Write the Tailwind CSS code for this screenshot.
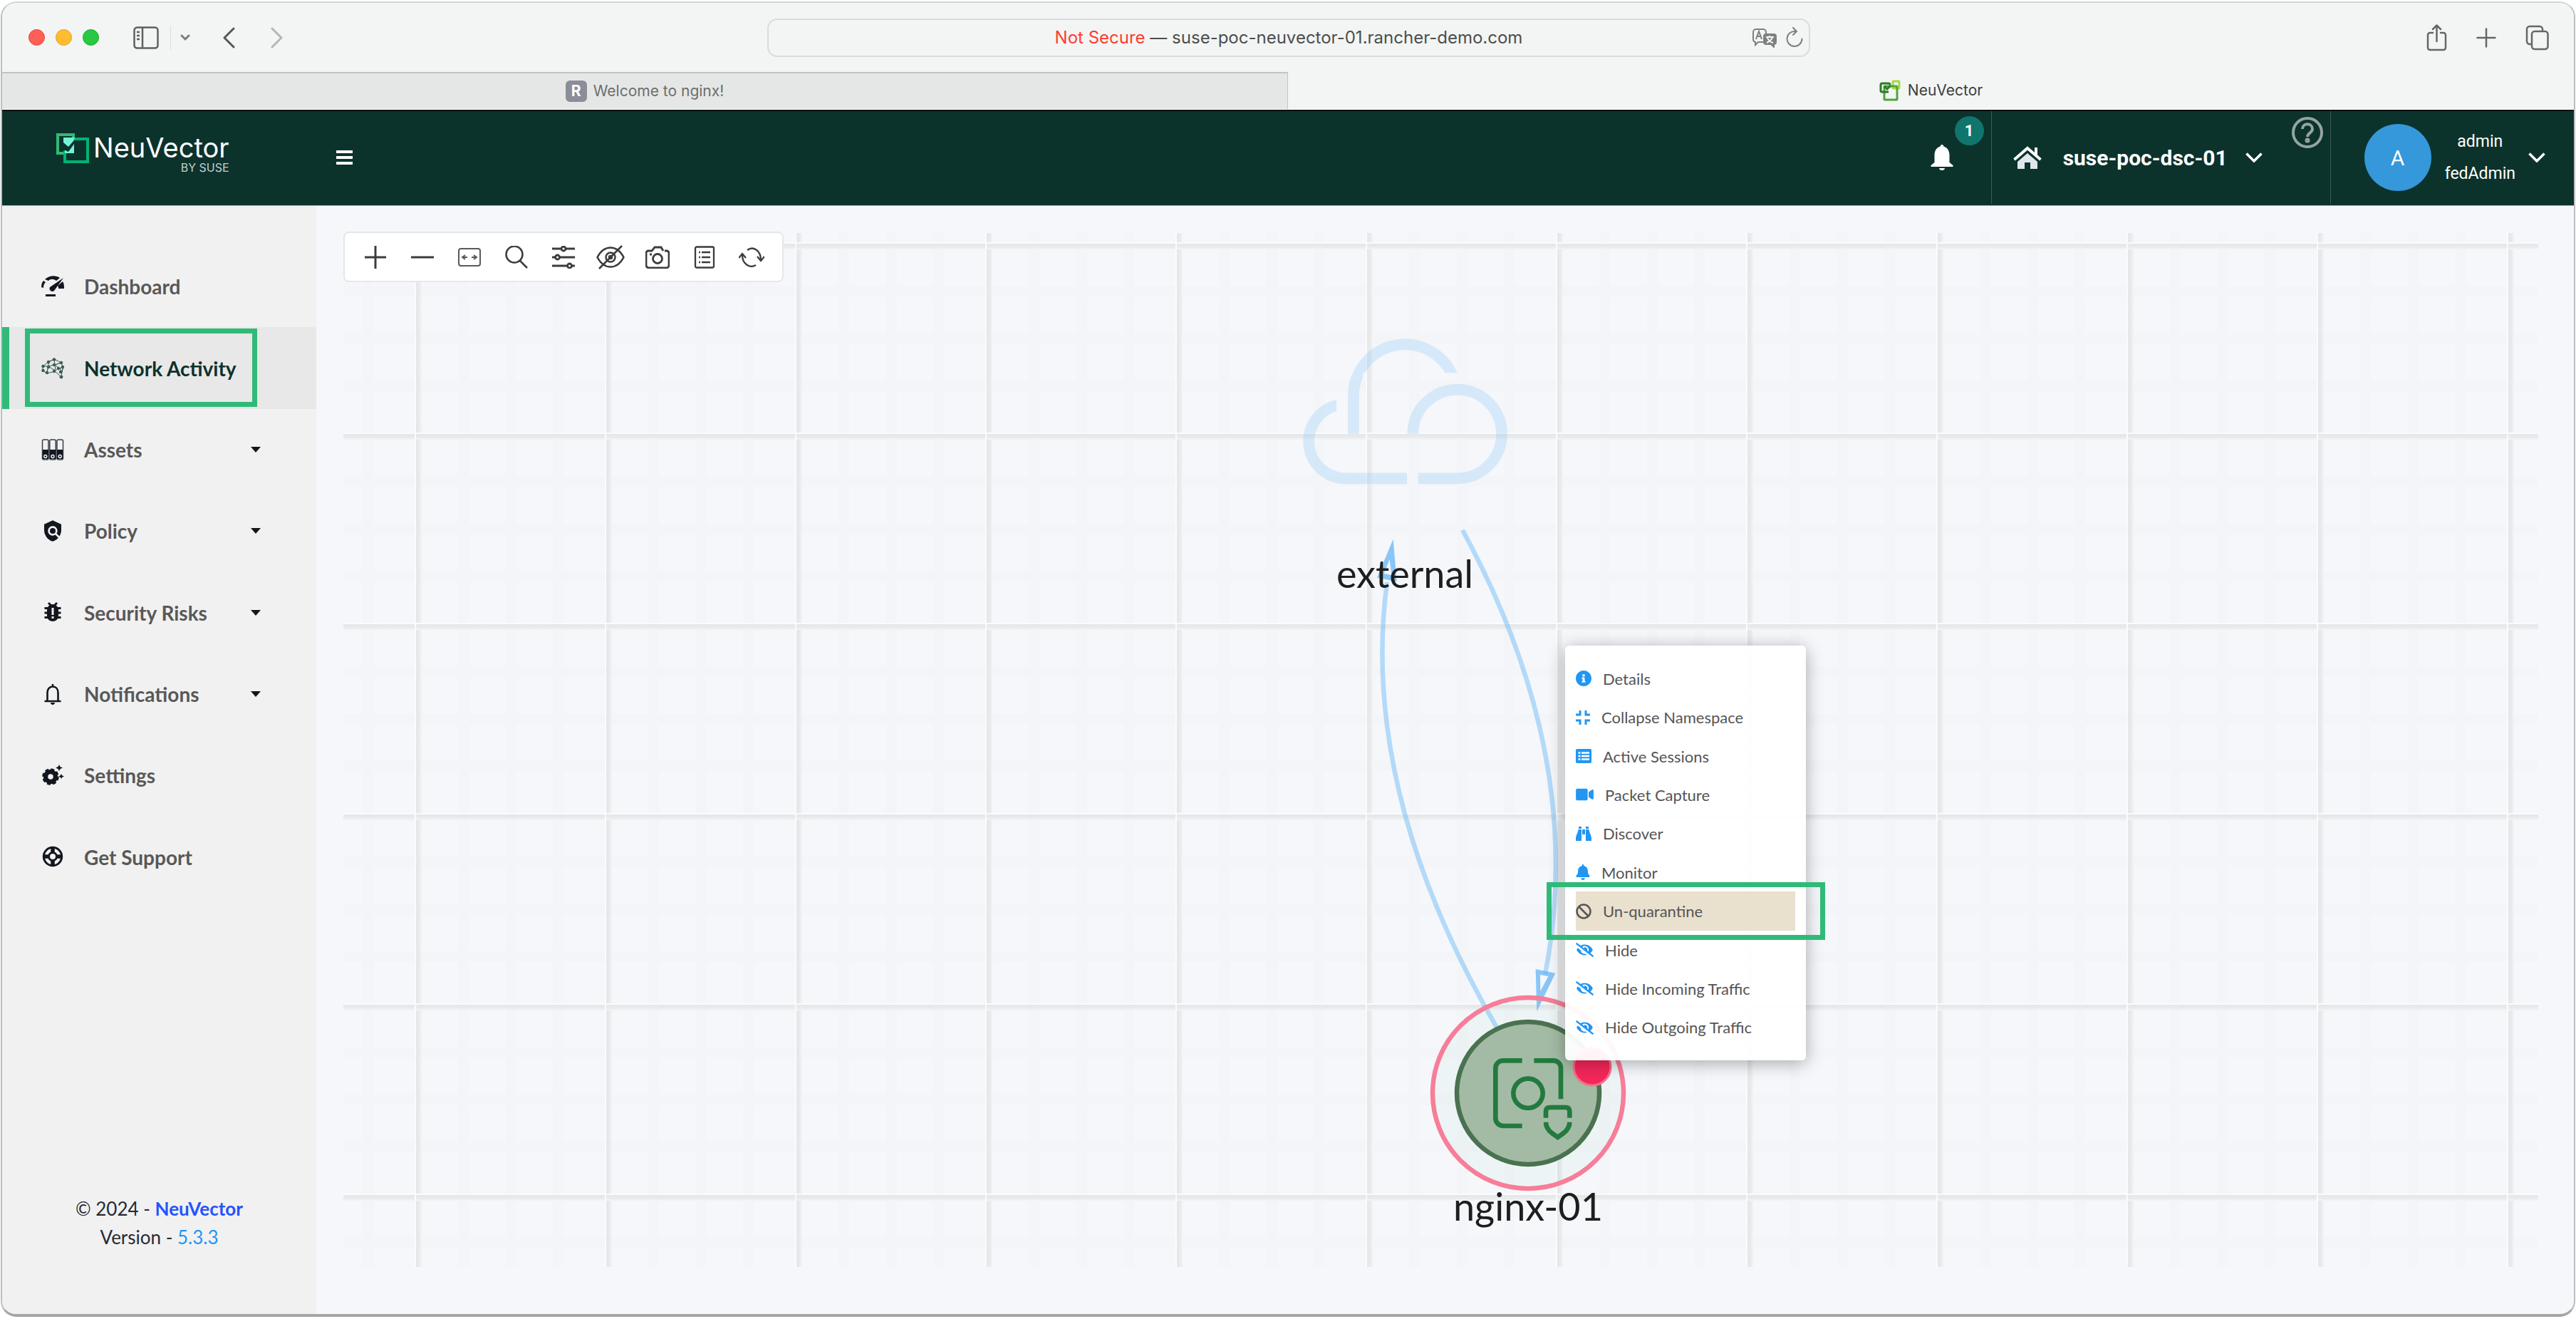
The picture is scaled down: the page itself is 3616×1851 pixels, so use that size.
<!DOCTYPE html>
<html lang="en">
<head>
<meta charset="utf-8">
<title>NeuVector</title>
<script src="https://cdn.jsdelivr.net/npm/@tailwindcss/browser@4"></script>
</head>
<body class="bg-white font-['Lato',sans-serif]">
<svg class="hidden" aria-hidden="true">
  <symbol id="eye-slash" viewBox="0 0 640 512"><path fill="currentColor" d="M320 400c-75.85 0-137.25-58.71-142.9-133.11L72.2 185.82c-13.79 17.3-26.48 35.59-36.72 55.59a32.35 32.35 0 0 0 0 29.19C89.71 376.41 197.07 448 320 448c26.91 0 52.87-4 77.89-10.46L346 397.39a144.13 144.13 0 0 1-26 2.61zm313.82 58.1l-110.55-85.44a331.25 331.25 0 0 0 81.25-102.07 32.35 32.35 0 0 0 0-29.19C550.29 135.59 442.93 64 320 64a308.15 308.15 0 0 0-147.32 37.7L45.46 3.37A16 16 0 0 0 23 6.18L3.37 31.45A16 16 0 0 0 6.18 53.9l588.36 454.73a16 16 0 0 0 22.46-2.81l19.64-25.27a16 16 0 0 0-2.82-22.45zm-183.72-142l-39.3-30.38A94.75 94.75 0 0 0 416 256a94.76 94.76 0 0 0-121.31-92.21A47.65 47.65 0 0 1 304 192a46.64 46.64 0 0 1-1.54 10l-73.61-56.89A142.31 142.31 0 0 1 320 112a143.92 143.92 0 0 1 144 144c0 21.63-5.29 41.79-13.9 60.11z"/></symbol>
  <symbol id="caret" viewBox="0 0 14 8"><path fill="#12161f" d="M0 0h14L7 8z"/></symbol>
</svg>

<div class="flex min-h-screen flex-col px-px pt-[2px] pb-[3px]">
<div class="flex flex-1 flex-col overflow-hidden rounded-[22px] border-2 border-b-4 border-[#bdbfbe] border-t-[#d2d3d3] border-b-[#a5a5a3] bg-[#f5f7fb]">

  <!-- Browser toolbar -->
  <div class="grid h-[97px] grid-cols-[1fr_40.6%_1fr] items-center bg-[#f3f5f4] pl-[2px] font-['Inter',sans-serif]">
    <div class="flex items-center pl-[35px]">
      <div class="flex gap-[15px]">
        <button aria-label="Close" class="size-[23px] rounded-full border border-[#e2463f] bg-[#ff5f57]"></button>
        <button aria-label="Minimize" class="size-[23px] rounded-full border border-[#e0a123] bg-[#febc2e]"></button>
        <button aria-label="Zoom" class="size-[23px] rounded-full border border-[#1aab29] bg-[#28c840]"></button>
      </div>
      <button aria-label="Sidebar" class="ml-[48px]"><svg class="h-8 w-9" viewBox="0 0 36 32" fill="none" stroke="#5e605f" stroke-width="2.5"><rect x="1.5" y="1.5" width="33" height="29" rx="4"/><path d="M13 2v28M5 8h4M5 13h4M5 18h4"/></svg></button>
      <span class="ml-4 h-[34px] w-px bg-[#dcdedd]"></span>
      <button aria-label="Tab groups" class="ml-[13px]"><svg class="h-3 w-[14px]" viewBox="0 0 14 12" fill="none" stroke="#7b7d7c" stroke-width="3" stroke-linecap="round"><path d="M2 3l5 5 5-5"/></svg></button>
      <button aria-label="Back" class="ml-[46px]"><svg class="h-[30px] w-[17px]" viewBox="0 0 17 30" fill="none" stroke="#565857" stroke-width="3" stroke-linecap="round" stroke-linejoin="round"><path d="M15 2L2 15l13 13"/></svg></button>
      <button aria-label="Forward" class="ml-[50px]"><svg class="h-[30px] w-[17px]" viewBox="0 0 17 30" fill="none" stroke="#b4b6b5" stroke-width="3" stroke-linecap="round" stroke-linejoin="round"><path d="M2 2l13 13L2 28"/></svg></button>
    </div>
    <div class="relative flex h-[54px] items-center justify-center rounded-[14px] border-2 border-[#dadcdb] text-2xl text-[#4c4e4d]">
      <label for="url" class="whitespace-pre"><span class="text-[#ff3b30]">Not Secure</span> — </label><input id="url" type="text" value="suse-poc-neuvector-01.rancher-demo.com" class="field-sizing-content bg-transparent outline-none">
      <div class="absolute right-2 flex items-center gap-3">
        <button aria-label="Translate"><svg class="h-7 w-9" viewBox="0 0 36 28" fill="none" stroke="#7e807f" stroke-width="2"><path d="M16 20H9l-4 4v-4a4 4 0 0 1-3-4V6a4 4 0 0 1 4-4h10a4 4 0 0 1 4 4v2M6 16l4-11 4 11M7 12h6"/><path fill="#7e807f" d="M20 9h11a3 3 0 0 1 3 3v8a3 3 0 0 1-3 3v4l-4-4h-7a3 3 0 0 1-3-3v-8a3 3 0 0 1 3-3z"/><path stroke="#f3f5f4" d="M20 13h11M25 11v2M29 13c-1 4-4 6-8 8M22 14c1 3 4 6 8 7"/></svg></button>
        <button aria-label="Reload"><svg class="h-[30px] w-6" viewBox="0 0 24 30" fill="none" stroke="#7e807f" stroke-width="2" stroke-linecap="round"><path d="M13 6a10.500 10.500 0 1 0 9.500 10.500M10 1l5 5-5 5"/></svg></button>
      </div>
    </div>
    <div class="flex items-center justify-end gap-[41px] pr-[35px] text-[#656766]">
      <button aria-label="Share"><svg class="h-[38px] w-[29px]" viewBox="0 0 29 38" fill="none" stroke="currentColor" stroke-width="2.500" stroke-linecap="round" stroke-linejoin="round"><path d="M9 12H5a3 3 0 0 0-3 3v18a3 3 0 0 0 3 3h19a3 3 0 0 0 3-3V15a3 3 0 0 0-3-3h-4M14.500 24V2M9 7l5.500-5.500L20 7"/></svg></button>
      <button aria-label="New tab"><svg class="size-7" viewBox="0 0 28 28" stroke="currentColor" stroke-width="2.500" stroke-linecap="round"><path d="M14 1.500v25M1.500 14h25"/></svg></button>
      <button aria-label="Tab overview"><svg class="h-9 w-[33px]" viewBox="0 0 33 36" fill="none" stroke="currentColor" stroke-width="2.500"><rect x="9" y="9" width="22.500" height="25" rx="4"/><path d="M9 27H6a4 4 0 0 1-4-4V6a4 4 0 0 1 4-4h14a4 4 0 0 1 4 4v3"/></svg></button>
    </div>
  </div>

  <!-- Browser tabs -->
  <div class="grid h-[53px] grid-cols-2 border-b border-white bg-[#f3f5f4] font-['Inter',sans-serif] text-[21px]">
    <a href="#" class="flex items-center justify-center gap-[9px] border-t-2 border-r border-[#c2c4c3] bg-[#e5e7e6] text-[#6c6e6d]"><span class="flex size-[30px] items-center justify-center rounded-md bg-[#8b8d98] font-bold text-white">R</span>Welcome to nginx!</a>
    <a href="#" class="flex items-center justify-center gap-[10px] text-[#3c3e3d]">
      <svg class="size-[30px]" viewBox="0 0 30 30" fill="none" stroke-width="3"><rect x="19" y="2" width="9" height="10" rx="1" stroke="#a8da3a"/><rect x="7" y="9" width="18" height="19" rx="1" stroke="#4ea53a"/><path stroke="#2d7a26" d="M13 17H4a2 2 0 0 1-2-2V7a2 2 0 0 1 2-2h9a2 2 0 0 1 2 2M7 9l4 4 5-5"/></svg>NeuVector</a>
  </div>

  <!-- Application header -->
  <header class="flex h-[135px] items-center border-t-2 border-t-[#02120f] border-b border-b-[#9db0ac] bg-[#0c322c] pb-[2px] font-['Roboto',sans-serif] text-white">
    <a href="#" class="flex w-[469px] items-start pb-3 pl-[76px] font-['Inter',sans-serif]">
      <svg class="h-[42px] w-[46px]" viewBox="0 0 46 42" fill="none" stroke-width="4"><path stroke="#30ba78" d="M11 28H2V2h22v6"/><path stroke="#00b373" d="M12 24v16h32V8H24"/><path fill="#73f3d5" d="M10 6h16l-2 5-7 8-7-6zM25 15v13H12v-4l5 2z"/></svg>
      <span class="ml-[6px] flex flex-col items-end"><span class="text-[38px] leading-10">NeuVector</span><span class="text-base leading-4 text-[#c3cfcd]">BY SUSE</span></span>
    </a>
    <button aria-label="Toggle menu" class="flex flex-col gap-1"><span class="h-1 w-[23px] bg-white"></span><span class="h-1 w-[23px] bg-white"></span><span class="h-1 w-[23px] bg-white"></span></button>
    <div class="ml-auto flex h-full">
      <button aria-label="Notifications" class="relative flex w-[85px] items-center">
        <svg class="h-9 w-8" viewBox="0 0 32 36" fill="#fff"><path d="M16 0c1.500 0 2.300 1 2.300 2.600C24 4 26.500 9 26.500 15v10l5 4v2H.5v-2l5-4V15c0-6 2.500-11 8.200-12.400C13.700 1 14.500 0 16 0zM12 33h8c0 2-2 3-4 3s-4-1-4-3z"/></svg>
        <span class="absolute top-[7px] left-[34px] flex size-[41px] items-center justify-center rounded-full bg-[#10756d] text-[22px] font-bold">1</span>
      </button>
      <button class="flex w-[422px] items-center border-l border-[#3d5b56] pl-[30px] text-[30px] font-bold">
        <svg class="h-8 w-10" viewBox="0 0 40 32"><path fill="#dfe6ee" d="M20 10L6 22v10h10v-9h8v9h10V22z"/><path fill="none" stroke="#fff" stroke-width="4" d="M1.500 19L20 3l18.500 16M32 2v11"/></svg>
        <span class="ml-[30px]">suse-poc-dsc-01</span>
        <svg class="ml-[25px] h-[14px] w-6" viewBox="0 0 24 14" fill="none" stroke="#fff" stroke-width="3.500"><path d="M1.500 1.500L12 12 22.500 1.500"/></svg>
      </button>
      <button aria-label="Help" class="mt-2 size-11 self-start text-[#93a5a2]"><svg viewBox="0 0 44 44" fill="none" stroke="currentColor" stroke-width="4"><circle cx="22" cy="22" r="20"/><path d="M15 17c0-9 14-9 14 0 0 5-7 6-7 11"/><circle cx="22" cy="33" r="1.500"/></svg></button>
      <button class="ml-[10px] flex items-center border-l border-[#3d5b56] pr-10 pl-[47px]">
        <span class="flex size-[94px] items-center justify-center rounded-full bg-[#3498db] text-[30px]">A</span>
        <span class="ml-[19px] flex flex-col items-center text-[23px] leading-[45px]"><span>admin</span><span>fedAdmin</span></span>
        <svg class="ml-[18px] h-[14px] w-6" viewBox="0 0 24 14" fill="none" stroke="#fff" stroke-width="3.500"><path d="M1.500 1.500L12 12 22.500 1.500"/></svg>
      </button>
    </div>
  </header>

  <div class="flex flex-1">
    <!-- Navigation -->
    <aside class="flex w-[441px] shrink-0 flex-col justify-between bg-[#f1f1f1] pt-14 pb-[88px]">
      <nav class="grid h-[915px] grid-rows-8 text-[28px] font-bold text-[#585858]">
        <a href="#" class="flex items-center border-l-[10px] border-transparent pl-[45px]"><svg class="mr-7 size-8" viewBox="0 0 32 32" fill="#12161f"><path d="M5 6C11 0 21 0 26 4l-5 4C17 5 13 5 10 8zM0 17c0-4 1-7 3-9l3 2c-2 2-3 4-3 8zM31 4L18 22a4 4 0 0 1-6-5zM30 9c2 3 2 6 2 10h-8c0-2 0-3-1-4zM6 27h14v3H6z"/></svg><span>Dashboard</span></a>
        <a href="#" class="relative flex items-center border-l-[10px] border-[#30ba78] bg-[#e8e8e8] pl-[45px] text-[#0c322c]"><svg class="mr-7 size-8" viewBox="0 0 32 32" fill="#3a5a54" stroke="#3a5a54"><path fill="none" d="M2 13L10 7l8-4 10 5 2 6-2 14-9-8-11 3-6-4 0-6 8 0 9-2 9-3-9 3-1-8-8 4v6l-2 8 2-8 9 6 1-7 6 4 5-3-5 3 3 5 2-8M18 20l6-4"/><circle cx="2.500" cy="13" r="1.800"/><circle cx="2.500" cy="19" r="1.800"/><circle cx="10" cy="7" r="1.800"/><circle cx="18" cy="3.500" r="1.800"/><circle cx="28" cy="8" r="1.800"/><circle cx="10" cy="14" r="1.800"/><circle cx="18" cy="11" r="1.800"/><circle cx="8" cy="22" r="1.800"/><circle cx="18" cy="20" r="1.800"/><circle cx="24" cy="16" r="1.800"/><circle cx="30" cy="14" r="1.800"/><circle cx="27" cy="21" r="1.800"/><circle cx="28" cy="28" r="2"/></svg><span>Network Activity</span>
          <span class="absolute top-[2px] left-[22px] h-[110px] w-[326px] border-[7px] border-[#30ba78]"></span></a>
        <a href="#" class="flex items-center border-l-[10px] border-transparent pl-[45px]"><svg class="mr-7 size-8" viewBox="0 0 32 32"><g fill="none" stroke="#3a3e48" stroke-width="1.500"><rect x="1.500" y="2" width="8.500" height="28" rx="2"/><rect x="11.800" y="2" width="8.500" height="28" rx="2"/><rect x="22" y="2" width="8.500" height="28" rx="2"/></g><path fill="#12161f" d="M2 16h8v13H2zM12 16h8v13h-8zM22 16h8v13h-8z"/><g fill="none" stroke="#fff" stroke-width="1.300"><circle cx="5.800" cy="25.500" r="2"/><circle cx="16" cy="25.500" r="2"/><circle cx="26.200" cy="25.500" r="2"/></g></svg><span>Assets</span><svg class="mr-[78px] ml-auto h-2 w-[14px]"><use href="#caret"/></svg></a>
        <a href="#" class="flex items-center border-l-[10px] border-transparent pl-[45px]"><svg class="mr-7 size-8" viewBox="0 0 24 24" fill="#12161f"><path d="M21 5l-9-4-9 4v6c0 5.550 3.840 10.740 9 12 2.300-.56 4.330-1.900 5.880-3.710l-3.120-3.120c-1.940 1.290-4.580 1.070-6.290-.64-1.950-1.950-1.950-5.120 0-7.070 1.950-1.950 5.120-1.950 7.070 0 1.710 1.710 1.920 4.350.64 6.290l2.900 2.900C20.290 15.690 21 13.380 21 11V5z"/><circle cx="12" cy="12" r="3"/></svg><span>Policy</span><svg class="mr-[78px] ml-auto h-2 w-[14px]"><use href="#caret"/></svg></a>
        <a href="#" class="flex items-center border-l-[10px] border-transparent pl-[45px]"><svg class="mr-7 size-8" viewBox="0 0 32 32"><path stroke="#12161f" stroke-width="3" d="M4.500 9.500h23M4.500 16h23M4.500 22.500h23M10 2l4 4M22 2l-4 4"/><path fill="#12161f" d="M16 4c5 0 8 4 8 8v8c0 5-4 8-8 8s-8-3-8-8v-8c0-4 3-8 8-8z"/><path stroke="#f1f1f1" stroke-width="3" d="M16 9v10M16 21v3"/></svg><span>Security Risks</span><svg class="mr-[78px] ml-auto h-2 w-[14px]"><use href="#caret"/></svg></a>
        <a href="#" class="flex items-center border-l-[10px] border-transparent pl-[45px]"><svg class="mr-7 size-8" viewBox="0 0 32 32" fill="none" stroke="#12161f" stroke-width="2.600"><path d="M4.500 26h23M8.500 26V14c0-5 3-8.500 7.500-8.500s7.500 3.500 7.500 8.500v12M16 2v3"/><path fill="#12161f" stroke="none" d="M13 28h6c0 4-6 4-6 0z"/></svg><span>Notifications</span><svg class="mr-[78px] ml-auto h-2 w-[14px]"><use href="#caret"/></svg></a>
        <a href="#" class="flex items-center border-l-[10px] border-transparent pl-[45px]"><svg class="mr-7 size-8" viewBox="0 0 32 32"><circle cx="13" cy="18" r="7" fill="none" stroke="#12161f" stroke-width="6.500"/><circle cx="13" cy="18" r="10.300" fill="none" stroke="#12161f" stroke-width="3" stroke-dasharray="4.900 3.190"/><path fill="#12161f" d="M25 1l1.500 3L30 5.500 26.500 7 25 10l-1.500-3L20 5.500 23.500 4zM28 14l1.200 2.200L32 17.500l-2.800 1.200L28 21l-1.200-2.300-2.800-1.200 2.800-1.300z"/></svg><span>Settings</span></a>
        <a href="#" class="flex items-center border-l-[10px] border-transparent pl-[45px]"><svg class="mr-7 size-8" viewBox="0 0 32 32" fill="none" stroke="#12161f"><circle cx="16" cy="15" r="12.700" stroke-width="3"/><circle cx="16" cy="15" r="5.500" stroke-width="3"/><path stroke-width="5.500" d="M16 2v7M16 21v7M3 15h7M22 15h7"/></svg><span>Get Support</span></a>
      </nav>
      <p class="text-center text-[26px] leading-10 text-[#262a36]">© 2024 - <a href="#" class="font-bold text-[#2453ff]">NeuVector</a><br>Version - <a href="#" class="text-[#2196f3]">5.3.3</a></p>
    </aside>

    <!-- Network graph -->
    <main class="flex flex-1 pt-9 pr-[50px] pb-[66px] pl-[38px]">
      <div class="relative flex-1">
        <svg class="absolute inset-0 size-full" aria-hidden="true">
          <defs>
            <linearGradient id="fade"><stop offset="0" stop-color="#e5e6e7"/><stop offset=".55" stop-color="#e9eaeb"/><stop offset="1" stop-color="#f3f4f6"/></linearGradient>
            <linearGradient id="fadeDown" x2="0" y2="1"><stop offset="0" stop-color="#e5e6e7"/><stop offset=".55" stop-color="#e9eaeb"/><stop offset="1" stop-color="#f3f4f6"/></linearGradient>
            <pattern id="grid" width="267" height="267" patternUnits="userSpaceOnUse" patternTransform="translate(100 15)">
              <path fill="#f4f5f8" d="M61 0h15v267H61zM128 0h15v267h-15zM194 0h15v267h-15zM0 61h267v15H0zM0 128h267v15H0zM0 194h267v15H0z"/>
              <path fill="#fafbfd" d="M0 0h2v267H0zM0 0h267v2H0z"/>
              <path fill="url(#fade)" d="M2 0h8v267H2z"/><path fill="url(#fadeDown)" d="M0 2h267v8H0z"/>
              <path fill="#fafbfd" d="M0 0h10v2H0zM0 0h2v10H0z"/>
            </pattern>
            <clipPath id="arcCut"><path d="M0 0h1200v250H400v400H0z"/></clipPath>
            <clipPath id="lobeCut"><path d="M0 0h288v500h600v400H0z"/></clipPath>
          </defs>
          <rect width="100%" height="100%" y="2" fill="url(#grid)"/>
          <g transform="translate(-482 -325)">
            <g transform="translate(1780 440) scale(.3333)" fill="none" stroke="#90caf9" stroke-opacity=".3" stroke-width="47">
              <path clip-path="url(#lobeCut)" d="M300 384.400A156 156 0 0 0 327 694H585"/>
              <path clip-path="url(#arcCut)" d="M360 507V348A217 217 0 0 1 785 285"/>
              <path d="M610 507A187 187 0 1 1 797 694H632"/>
            </g>
            <g fill="none" stroke="#64b5f6" stroke-opacity=".45" stroke-width="6.500">
              <path d="M2104 1447L2100 1440Q1908 1108 1947 817"/>
              <path d="M2053 744Q2228 1065 2169 1367"/>
            </g>
            <g fill="#64b5f6" fill-opacity=".75" fill-rule="evenodd">
              <path transform="translate(1780 440) scale(.3333)" d="M527 950l15 178-83-16zM512 1035l-24 60 32 6z"/>
              <path transform="translate(1980 1340) scale(.3333)" d="M527 60l83 17-78 161zM546 84l34 6-33 62z"/>
            </g>
            <circle cx="2145" cy="1534" r="134" fill="#30ba78" fill-opacity=".04" stroke="#f77d98" stroke-width="6.500"/>
            <circle cx="2145" cy="1534" r="100" fill="#a3bba5" stroke="#4a7250" stroke-width="6.500"/>
            <g transform="translate(1980 1340) scale(.3333)" fill="none" stroke="#237a3f" stroke-width="20">
              <path d="M470 445H390A32 32 0 0 0 358 477V688A32 32 0 0 0 390 720H470M520 445H602A31 31 0 0 1 633 476V607"/>
              <circle cx="495" cy="583" r="62"/>
              <path d="M570 686V660Q570 642 588 642H652Q670 642 670 660V686M570 704Q570 730 595 750L620 768 645 750Q670 730 670 704"/>
            </g>
            <circle cx="2235" cy="1497" r="26" fill="#f4275a" stroke="#f76c8a" stroke-width="3"/>
          </g>
        </svg>
        <span class="absolute top-[448px] left-[1340px] w-[300px] text-center text-[54px] leading-[64px] text-[#1e1e1e]">external</span>
        <span class="absolute top-[1336px] left-[1513px] w-[300px] text-center text-[54px] leading-[64px] text-[#1e1e1e]">nginx-01</span>

        <div class="absolute top-0 left-0 flex h-[71px] items-center rounded-lg border-2 border-[#e6e7e8] bg-white px-[10px] text-[#3c3c3c]">
          <button aria-label="Zoom in" class="flex w-[66px] justify-center"><svg class="size-8" viewBox="0 0 32 32" stroke="currentColor" stroke-width="3"><path d="M16 0v32M1 16h30"/></svg></button>
          <button aria-label="Zoom out" class="flex w-[66px] justify-center"><svg class="size-8" viewBox="0 0 32 32" stroke="currentColor" stroke-width="3"><path d="M0 16h32"/></svg></button>
          <button aria-label="Fit" class="flex w-[66px] justify-center"><svg class="size-8" viewBox="0 0 32 32" fill="none" stroke="#5a5a5a" stroke-width="2"><rect x="1" y="4" width="30" height="24" rx="3"/><path d="M13 16H7M10 13l-4 3 4 3M19 16h6M22 13l4 3-4 3"/></svg></button>
          <button aria-label="Search" class="flex w-[66px] justify-center"><svg class="size-8" viewBox="0 0 32 32" fill="none" stroke="currentColor" stroke-width="2.500"><circle cx="13" cy="12" r="11.500"/><path d="M21 21l10 10"/></svg></button>
          <button aria-label="Filter" class="flex w-[66px] justify-center"><svg class="size-8" viewBox="0 0 32 32" fill="none" stroke="currentColor" stroke-width="2.800"><path d="M0 4h13M19 4h13M0 16h4M11 16h21M0 28h21M28 28h4"/><circle cx="16" cy="4" r="3"/><circle cx="7.500" cy="16" r="3"/><circle cx="24.500" cy="28" r="3"/></svg></button>
          <button aria-label="Hidden items" class="flex w-[66px] justify-center"><svg class="h-[34px] w-10" viewBox="0 0 40 34" fill="none" stroke="currentColor" stroke-width="2.500"><path d="M1.500 17C11-1 29-1 38.500 17 29 35 11 35 1.500 17zM36 1L4 33"/><circle cx="20" cy="17" r="6.500"/><circle cx="20" cy="17" r="2"/></svg></button>
          <button aria-label="Screenshot" class="flex w-[66px] justify-center"><svg class="h-8 w-[34px]" viewBox="0 0 34 32" fill="none" stroke="currentColor" stroke-width="2.800"><path d="M27 7h3a3 3 0 0 1 3 3v17a4 4 0 0 1-4 4H5a4 4 0 0 1-4-4V10a3 3 0 0 1 3-3h5l4-5h9l3 5M6 12h3"/><circle cx="17" cy="18" r="6.500"/></svg></button>
          <button aria-label="Legend" class="flex w-[66px] justify-center"><svg class="size-8" viewBox="0 0 32 32" fill="none" stroke="currentColor" stroke-width="2.300"><rect x="3" y="1.500" width="26" height="29" rx="2"/><path d="M8 9h2M12 9h12M8 16h2M12 16h12M8 23h2M12 23h12"/></svg></button>
          <button aria-label="Refresh" class="flex w-[66px] justify-center"><svg class="h-7 w-9" viewBox="0 0 36 28" fill="none" stroke="currentColor" stroke-width="2.300"><path d="M12 4C20-2 31 4 31 18M26 13l5 6 5-6M24 25C16 30 5 24 5 11M0 15l5-6 5 6"/></svg></button>
        </div>

        <div role="menu" class="absolute top-[581px] left-[1715px] flex h-[582px] w-[338px] flex-col rounded-md bg-white/95 px-[15px] py-[19px] text-[22px] text-[#555] shadow-[0_4px_24px_rgba(0,0,0,0.32)]">
          <button role="menuitem" class="flex flex-1 items-center gap-4"><svg class="size-[22px]" viewBox="8 8 496 496" fill="#2196f3"><path d="M256 8C119.043 8 8 119.083 8 256c0 136.997 111.043 248 248 248s248-111.003 248-248C504 119.083 392.957 8 256 8zm0 110c23.196 0 42 18.804 42 42s-18.804 42-42 42-42-18.804-42-42 18.804-42 42-42zm56 254c0 6.627-5.373 12-12 12h-88c-6.627 0-12-5.373-12-12v-24c0-6.627 5.373-12 12-12h12v-64h-12c-6.627 0-12-5.373-12-12v-24c0-6.627 5.373-12 12-12h64c6.627 0 12 5.373 12 12v100h12c6.627 0 12 5.373 12 12v24z"/></svg>Details</button>
          <button role="menuitem" class="flex flex-1 items-center gap-4"><svg class="size-[20px]" viewBox="0 0 20 20" fill="none" stroke="#2196f3" stroke-width="3"><path d="M6 0v6H0M14 0v6h6M0 14h6v6M20 14h-6v6"/></svg>Collapse Namespace</button>
          <button role="menuitem" class="flex flex-1 items-center gap-4"><svg class="h-5 w-[22px]" viewBox="0 0 22 20"><rect width="22" height="20" rx="2" fill="#2196f3"/><path stroke="#fff" stroke-width="2.500" d="M3.500 5.500h3M8 5.500h11M3.500 10h3M8 10h11M3.500 14.500h3M8 14.500h11"/></svg>Active Sessions</button>
          <button role="menuitem" class="flex flex-1 items-center gap-4"><svg class="h-[22px] w-[25px]" viewBox="0 0 576 512" fill="#2196f3"><path d="M336.200 64H47.800C21.400 64 0 85.400 0 111.800v288.400C0 426.600 21.400 448 47.800 448h288.400c26.400 0 47.800-21.400 47.800-47.800V111.800c0-26.400-21.400-47.800-47.800-47.800zm189.400 37.700L416 177.300v157.400l109.600 75.500c21.200 14.600 50.400-.3 50.400-25.800V127.500c0-25.400-29.100-40.400-50.400-25.800z"/></svg>Packet Capture</button>
          <button role="menuitem" class="flex flex-1 items-center gap-4"><svg class="h-5 w-[22px]" viewBox="0 0 22 20" fill="#2196f3"><path d="M4 0h4v3H4zM14 0h4v3h-4zM3.500 4H8v16H0v-3C0 12 3 9 3.500 4zM18.500 4H14v16h8v-3c0-5-3-8-3.500-13zM9 4h4v7H9z"/></svg>Discover</button>
          <button role="menuitem" class="flex flex-1 items-center gap-4"><svg class="h-[22px] w-5" viewBox="0 0 448 512" fill="#2196f3"><path d="M224 512c35.320 0 63.970-28.650 63.970-64H160.030c0 35.350 28.650 64 63.970 64zm215.390-149.710c-19.320-20.760-55.470-51.990-55.470-154.290 0-77.700-54.480-139.900-127.940-155.160V32c0-17.670-14.320-32-31.980-32s-31.980 14.330-31.980 32v20.840C118.560 68.100 64.080 130.300 64.080 208c0 102.300-36.150 133.530-55.470 154.290-6 6.450-8.660 14.160-8.610 21.710.11 16.400 12.980 32 32.100 32h383.800c19.120 0 32-15.600 32.100-32 .05-7.550-2.610-15.270-8.610-21.710z"/></svg>Monitor</button>
          <button role="menuitem" class="relative flex flex-1 items-center gap-4 bg-[#e9e0ce]"><svg class="size-[22px]" viewBox="0 0 22 22" fill="none" stroke="#555" stroke-width="2.500"><circle cx="11" cy="11" r="9.500"/><path d="M4.500 4.500l13 13"/></svg>Un-quarantine
            <span class="absolute -top-[13px] -left-[41px] h-[81px] w-[391px] border-[7px] border-[#30ba78]"></span></button>
          <button role="menuitem" class="flex flex-1 items-center gap-4"><svg class="h-[22px] w-[25px] text-[#2196f3]"><use href="#eye-slash"/></svg>Hide</button>
          <button role="menuitem" class="flex flex-1 items-center gap-4"><svg class="h-[22px] w-[25px] text-[#2196f3]"><use href="#eye-slash"/></svg>Hide Incoming Traffic</button>
          <button role="menuitem" class="flex flex-1 items-center gap-4"><svg class="h-[22px] w-[25px] text-[#2196f3]"><use href="#eye-slash"/></svg>Hide Outgoing Traffic</button>
        </div>
      </div>
    </main>
  </div>
</div>
</div>
</body>
</html>
